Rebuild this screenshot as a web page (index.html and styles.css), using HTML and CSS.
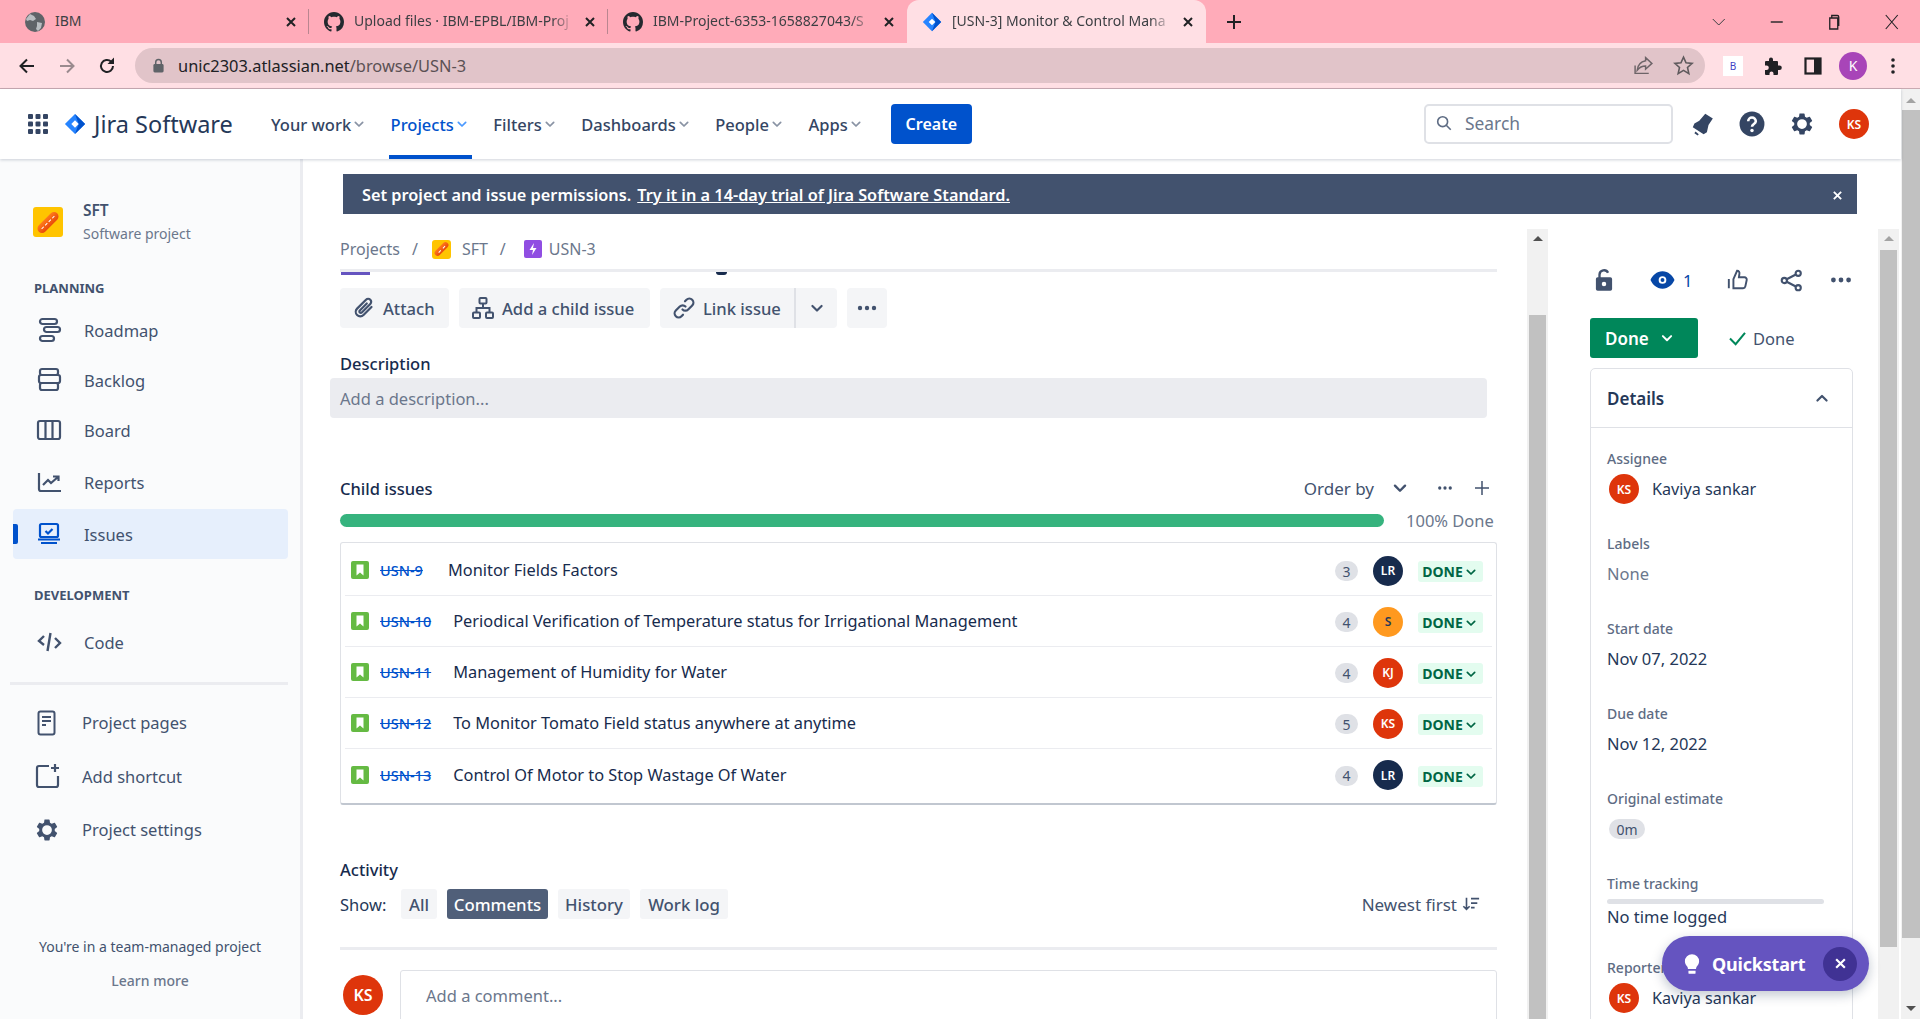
FILE: index.html
```html
<!DOCTYPE html>
<html lang="en">
<head>
    <meta charset="UTF-8">
    <title>[USN-3] Monitor &amp; Control Management</title>
    <meta name="viewport" content="width=device-width">
    <link rel="stylesheet" href="styles.css">
</head>
<body>

<svg class="sprite" width="0" height="0">
  <symbol id="i-globe" viewBox="0 0 20 20"><circle cx="10" cy="10" r="10" fill="#5f6368"/><path d="M5 2l4 2 2 3-3 2-3-1-3 1-1-2zM12 10l5 1-1 5-3 3-2-2 1-3z" fill="#b9bdc1"/></symbol>
  <symbol id="i-github" viewBox="0 0 16 16"><path fill="#24292f" d="M8 0C3.58 0 0 3.58 0 8c0 3.54 2.29 6.53 5.47 7.59.4.07.55-.17.55-.38 0-.19-.01-.82-.01-1.49-2.01.37-2.53-.49-2.69-.94-.09-.23-.48-.94-.82-1.13-.28-.15-.68-.52-.01-.53.63-.01 1.08.58 1.23.82.72 1.21 1.87.87 2.33.66.07-.52.28-.87.51-1.07-1.78-.2-3.64-.89-3.64-3.95 0-.87.31-1.59.82-2.15-.08-.2-.36-1.02.08-2.12 0 0 .67-.21 2.2.82.64-.18 1.32-.27 2-.27.68 0 1.36.09 2 .27 1.53-1.04 2.2-.82 2.2-.82.44 1.1.16 1.92.08 2.12.51.56.82 1.27.82 2.15 0 3.07-1.87 3.75-3.65 3.95.29.25.54.73.54 1.48 0 1.07-.01 1.93-.01 2.2 0 .21.15.46.55.38A8.013 8.013 0 0016 8c0-4.42-3.58-8-8-8z"/></symbol>
  <symbol id="i-jira" viewBox="0 0 24 24"><path fill="#2684ff" d="M12 1l11 11-11 11L1 12z"/><path fill="#0052cc" d="M12 1l11 11-11 11 4-11z"/><path fill="#fff" d="M12 8l4 4-4 4-4-4z"/></symbol>
  <symbol id="i-close" viewBox="0 0 12 12"><path d="M2 2l8 8M10 2l-8 8" stroke="currentColor" stroke-width="2" fill="none"/></symbol>
  <symbol id="i-chev" viewBox="0 0 24 24"><path d="M6.500 9.500l5.500 5.500 5.500-5.500" stroke="currentColor" stroke-width="2.600" fill="none" stroke-linecap="round" stroke-linejoin="round"/></symbol>
  <symbol id="i-up" viewBox="0 0 24 24"><path d="M6.500 15l5.500-5.500 5.500 5.500" stroke="currentColor" stroke-width="2.600" fill="none" stroke-linecap="round" stroke-linejoin="round"/></symbol>
  <symbol id="i-dots" viewBox="0 0 24 24"><circle cx="5" cy="12" r="2.200" fill="currentColor"/><circle cx="12" cy="12" r="2.200" fill="currentColor"/><circle cx="19" cy="12" r="2.200" fill="currentColor"/></symbol>
  <symbol id="i-roadmap" viewBox="0 0 26 26"><g fill="none" stroke="currentColor" stroke-width="2.200"><rect x="4" y="2" width="17" height="5" rx="2.500"/><rect x="8" y="10" width="16" height="5" rx="2.500"/><rect x="4" y="19" width="14" height="5" rx="2.500"/></g></symbol>
  <symbol id="i-backlog" viewBox="0 0 26 26"><g fill="none" stroke="currentColor" stroke-width="2.200"><rect x="4" y="2" width="18" height="6" rx="2"/><rect x="3" y="8" width="21" height="8" rx="2"/><rect x="4" y="16" width="18" height="7" rx="2"/></g></symbol>
  <symbol id="i-board" viewBox="0 0 26 26"><g fill="none" stroke="currentColor" stroke-width="2.200"><rect x="2" y="4" width="22" height="18" rx="2"/><path d="M9.500 4v18M16.500 4v18"/></g></symbol>
  <symbol id="i-reports" viewBox="0 0 26 26"><path d="M3 4v16a2 2 0 002 2h20M7 16l5-5 3 3 7-6M17 7.500h5.500V12" fill="none" stroke="currentColor" stroke-width="2.200"/></symbol>
  <symbol id="i-issues" viewBox="0 0 26 26"><g fill="none" stroke="currentColor" stroke-width="2.200"><rect x="4" y="3" width="18" height="13" rx="1.500"/><path d="M2 18.500h22M5 22h16M9.500 10l2.500 2.500 4.500-4.500"/></g></symbol>
  <symbol id="i-code" viewBox="0 0 26 26"><path d="M8 7l-5 5 5 4M14.500 4l-3 18M19 9l5 5-5 5" fill="none" stroke="currentColor" stroke-width="2.400"/></symbol>
  <symbol id="i-page" viewBox="0 0 26 26"><g fill="none" stroke="currentColor" stroke-width="2"><rect x="4.500" y="1.500" width="16" height="23" rx="2"/><path d="M8 7h9M8 11h9M8 15h4"/></g></symbol>
  <symbol id="i-shortcut" viewBox="0 0 26 26"><path d="M15 3H5a2 2 0 00-2 2v17a2 2 0 002 2h17a2 2 0 002-2V13M21 1v8M17 5h8" fill="none" stroke="currentColor" stroke-width="2.200"/></symbol>
  <symbol id="i-gear" viewBox="0 0 24 24"><path fill="currentColor" d="M19.140 12.940c.04-.3.06-.61.06-.94 0-.32-.02-.64-.07-.94l2.030-1.580a.49.49 0 00.12-.61l-1.920-3.320a.488.488 0 00-.59-.22l-2.390.96c-.5-.38-1.030-.7-1.620-.94l-.36-2.540a.484.484 0 00-.48-.41h-3.840c-.24 0-.43.17-.47.41l-.36 2.540c-.59.24-1.130.57-1.620.94l-2.390-.96c-.22-.08-.47 0-.59.22L2.740 8.870c-.12.21-.08.47.12.61l2.030 1.580c-.05.3-.09.63-.09.94s.02.64.07.94l-2.030 1.580a.49.49 0 00-.12.61l1.920 3.320c.12.22.37.29.59.22l2.390-.96c.5.38 1.030.7 1.620.94l.36 2.540c.05.24.24.41.48.41h3.840c.24 0 .44-.17.47-.41l.36-2.540c.59-.24 1.130-.56 1.620-.94l2.390.96c.22.08.47 0 .59-.22l1.920-3.320c.12-.22.07-.47-.12-.61l-2.010-1.580zM12 16.500a4.500 4.500 0 110-9 4.500 4.500 0 010 9z"/></symbol>
  <symbol id="i-clip" viewBox="0 0 24 24"><path d="M19.500 11l-8 8a4.500 4.500 0 01-6.400-6.400L14 3.700a3 3 0 014.300 4.300l-8.500 8.500a1.400 1.400 0 01-2-2l7-7" fill="none" stroke="currentColor" stroke-width="2.200" stroke-linecap="round"/></symbol>
  <symbol id="i-tree" viewBox="0 0 24 24"><g fill="none" stroke="currentColor" stroke-width="2"><rect x="8.500" y="2" width="7" height="5.500" rx="1"/><rect x="2" y="16.500" width="7" height="5.500" rx="1"/><rect x="15" y="16.500" width="7" height="5.500" rx="1"/><path d="M12 7.500V12M5.500 16.500V12h13v4.500"/></g></symbol>
  <symbol id="i-link" viewBox="0 0 24 24"><g fill="none" stroke="currentColor" stroke-width="2.200" stroke-linecap="round"><path d="M10.500 13.500a4 4 0 005.700 0l4-4a4 4 0 00-5.700-5.700l-1.500 1.500"/><path d="M13.500 10.500a4 4 0 00-5.700 0l-4 4a4 4 0 005.700 5.700l1.500-1.500"/></g></symbol>
  <symbol id="i-sort" viewBox="0 0 20 20"><path d="M5 3v13M1.500 12.500L5 16l3.500-3.500M10 4h9M10 9h7M10 14h4" fill="none" stroke="currentColor" stroke-width="1.800"/></symbol>
  <symbol id="i-story" viewBox="0 0 18 18"><rect width="18" height="18" rx="2" fill="#65ba43"/><path d="M5.500 3.500h7v11L9 11.500l-3.500 3z" fill="#fff"/></symbol>
</svg>

<div class="tabstrip">
  <div class="tab sep">
    <svg class="tab-ico"><use href="#i-globe"/></svg>
    <span class="tab-title">IBM</span>
    <svg class="tab-x"><use href="#i-close"/></svg>
  </div>
  <div class="tab sep">
    <svg class="tab-ico"><use href="#i-github"/></svg>
    <span class="tab-title fade">Upload files · IBM-EPBL/IBM-Proj</span>
    <svg class="tab-x"><use href="#i-close"/></svg>
  </div>
  <div class="tab">
    <svg class="tab-ico"><use href="#i-github"/></svg>
    <span class="tab-title fade">IBM-Project-6353-1658827043/S</span>
    <svg class="tab-x"><use href="#i-close"/></svg>
  </div>
  <div class="tab active">
    <svg class="tab-ico"><use href="#i-jira"/></svg>
    <span class="tab-title fade">[USN-3] Monitor &amp; Control Mana</span>
    <svg class="tab-x"><use href="#i-close"/></svg>
  </div>
  <svg class="newtab" viewBox="0 0 16 16"><path d="M8 1v14M1 8h14" stroke="#202124" stroke-width="2"/></svg>
  <div class="winctl">
    <svg viewBox="0 0 16 16"><path d="M2 5l6 6 6-6" fill="none" stroke="#3c4043"/></svg>
    <svg viewBox="0 0 16 16"><path d="M2 8h12" stroke="#202124" stroke-width="1.400"/></svg>
    <svg viewBox="0 0 16 16"><path d="M4 4h8v11H4zM6 4V1.500h5.500q1.500 0 1.500 1.500v9" fill="none" stroke="#202124" stroke-width="1.300"/></svg>
    <svg viewBox="0 0 16 16"><path d="M2 1l12 14M14 1L2 15" stroke="#202124" stroke-width="1.100"/></svg>
  </div>
</div>

<div class="toolbar">
  <div class="tb-btn"><svg viewBox="0 0 20 20"><path d="M17 10H4M10 3.500L3.500 10l6.500 6.500" fill="none" stroke="#202124" stroke-width="2"/></svg></div>
  <div class="tb-btn"><svg viewBox="0 0 20 20"><path d="M3 10h13M10 3.500l6.500 6.500-6.500 6.500" fill="none" stroke="#9a8a8e" stroke-width="2"/></svg></div>
  <div class="tb-btn"><svg viewBox="0 0 20 20"><path d="M16 10a6 6 0 11-1.800-4.300" fill="none" stroke="#202124" stroke-width="2"/><path d="M17 1.500V8h-6.500z" fill="#202124"/></svg></div>
  <div class="omnibox">
    <svg class="lock" viewBox="0 0 14 16"><rect x="1.500" y="6.500" width="11" height="9" rx="1.500" fill="#5f6368"/><path d="M4 7V4.500a3 3 0 016 0V7" fill="none" stroke="#5f6368" stroke-width="1.600"/></svg>
    <span class="url">unic2303.atlassian.net<span class="url-path">/browse/USN-3</span></span>
    <svg class="omni-ico" viewBox="0 0 20 20"><path d="M12 2.500l6 5.500-6 5.500V10.500c-4 0-6 1.500-8 4 .5-5 3-8 8-9zM2 10v7.500h13" fill="none" stroke="#6d6468" stroke-width="1.400"/></svg>
    <svg class="omni-ico star" viewBox="0 0 20 20"><path d="M10 2l2.400 5.400 5.800.6-4.400 3.900 1.300 5.800L10 14.700l-5.100 3 1.300-5.800L1.800 8l5.800-.6z" fill="none" stroke="#5f5a5d" stroke-width="1.500"/></svg>
  </div>
  <div class="tb-btn"><span class="ext-b">B</span></div>
  <div class="tb-btn"><svg viewBox="0 0 20 20"><path fill="#202124" d="M8 1.500a2 2 0 012 2V5h4a1 1 0 011 1v3.500h1.500a2.300 2.300 0 010 4.600H15V18a1 1 0 01-1 1h-3.500v-1.500a2 2 0 00-4 0V19H3a1 1 0 01-1-1v-4h1.500a2.300 2.300 0 000-4.600H2V6a1 1 0 011-1h3V3.500a2 2 0 012-2z"/></svg></div>
  <div class="tb-btn"><svg viewBox="0 0 20 20"><rect x="2.500" y="2.500" width="15" height="15" fill="none" stroke="#202124" stroke-width="2.200"/><rect x="11" y="3" width="6" height="14" fill="#202124"/></svg></div>
  <div class="tb-btn"><span class="profile">K</span></div>
  <div class="tb-btn"><svg viewBox="0 0 20 20"><circle cx="10" cy="4" r="1.800" fill="#202124"/><circle cx="10" cy="10" r="1.800" fill="#202124"/><circle cx="10" cy="16" r="1.800" fill="#202124"/></svg></div>
</div>

<div class="page">
  <div class="viewport">

    <header class="topnav">
      <svg class="grid-ico" viewBox="0 0 20 20" fill="#344563"><rect x="0" y="0" width="5" height="5" rx="1"/><rect x="7.500" y="0" width="5" height="5" rx="1"/><rect x="15" y="0" width="5" height="5" rx="1"/><rect x="0" y="7.500" width="5" height="5" rx="1"/><rect x="7.500" y="7.500" width="5" height="5" rx="1"/><rect x="15" y="7.500" width="5" height="5" rx="1"/><rect x="0" y="15" width="5" height="5" rx="1"/><rect x="7.500" y="15" width="5" height="5" rx="1"/><rect x="15" y="15" width="5" height="5" rx="1"/></svg>
      <svg class="jira-logo"><use href="#i-jira"/></svg>
      <span class="product">Jira Software</span>
      <nav class="topmenu">
        <a class="menu-item">Your work<svg><use href="#i-chev"/></svg></a>
        <a class="menu-item current">Projects<svg><use href="#i-chev"/></svg></a>
        <a class="menu-item">Filters<svg><use href="#i-chev"/></svg></a>
        <a class="menu-item">Dashboards<svg><use href="#i-chev"/></svg></a>
        <a class="menu-item">People<svg><use href="#i-chev"/></svg></a>
        <a class="menu-item">Apps<svg><use href="#i-chev"/></svg></a>
      </nav>
      <button class="create">Create</button>
      <div class="searchbox">
        <svg viewBox="0 0 20 20"><circle cx="8.500" cy="8.500" r="5.500" fill="none" stroke="#5e6c84" stroke-width="1.800"/><path d="M12.500 12.500l5 5" stroke="#5e6c84" stroke-width="1.800"/></svg>
        <span>Search</span>
      </div>
      <svg class="nav-ico bell" viewBox="0 0 24 24"><path fill="#344563" d="M15 2.500l7 4.500-4 6-1.500 6.500-3 2-10-6.500 1.500-3.500 4.500-2.500zM6 19l3 2.500-1 1-3-2z"/></svg>
      <svg class="nav-ico" viewBox="0 0 24 24"><circle cx="12" cy="12" r="11.500" fill="#344563"/><path d="M8.500 9.500a3.500 3.500 0 117 0c0 2.500-3.500 2.500-3.500 5" fill="none" stroke="#fff" stroke-width="2.400"/><circle cx="12" cy="18" r="1.600" fill="#fff"/></svg>
      <svg class="nav-ico gear"><use href="#i-gear"/></svg>
      <span class="avatar red nav-avatar">KS</span>
    </header>

    <div class="below">
      <aside class="sidebar">
        <div class="project">
          <span class="sft-logo big"><i></i></span>
          <div>
            <div class="project-name">SFT</div>
            <div class="project-type">Software project</div>
          </div>
        </div>

        <div class="side-title">PLANNING</div>
        <a class="side-item"><svg><use href="#i-roadmap"/></svg>Roadmap</a>
        <a class="side-item"><svg><use href="#i-backlog"/></svg>Backlog</a>
        <a class="side-item"><svg><use href="#i-board"/></svg>Board</a>
        <a class="side-item spaced"><svg><use href="#i-reports"/></svg>Reports</a>
        <a class="side-item spaced selected"><svg><use href="#i-issues"/></svg>Issues</a>

        <div class="side-title dev">DEVELOPMENT</div>
        <a class="side-item"><svg><use href="#i-code"/></svg>Code</a>

        <div class="side-rule"></div>

        <a class="side-item lower"><svg><use href="#i-page"/></svg>Project pages</a>
        <a class="side-item lower"><svg><use href="#i-shortcut"/></svg>Add shortcut</a>
        <a class="side-item lower"><svg><use href="#i-gear"/></svg>Project settings</a>

        <div class="side-foot">You're in a team-managed project</div>
        <div class="side-foot more">Learn more</div>
      </aside>

      <main class="content">
        <div class="banner">
          <span class="banner-text">Set project and issue permissions.</span>
          <a class="banner-link">Try it in a 14-day trial of Jira Software Standard.</a>
          <svg class="banner-x"><use href="#i-close"/></svg>
        </div>

        <div class="panes">
          <section class="issue">
            <div class="crumbs">
              <span>Projects</span>
              <span class="slash">/</span>
              <span class="sft-logo small"><i></i></span>
              <span>SFT</span>
              <span class="slash">/</span>
              <svg class="epic" viewBox="0 0 18 18"><rect width="18" height="18" rx="2" fill="#904ee2"/><path d="M10 3L5.500 10H9l-1 5 4.500-7H9z" fill="#fff"/></svg>
              <span>USN-3</span>
            </div>
            <div class="cut"><i class="cut-a"></i><i class="cut-b"></i></div>

            <div class="actions">
              <button class="act w-attach"><svg><use href="#i-clip"/></svg>Attach</button>
              <button class="act w-child"><svg><use href="#i-tree"/></svg>Add a child issue</button>
              <div class="act-group">
                <button class="act joined"><svg><use href="#i-link"/></svg>Link issue</button>
                <button class="act chevbtn"><svg><use href="#i-chev"/></svg></button>
              </div>
              <button class="act morebtn"><svg><use href="#i-dots"/></svg></button>
            </div>

            <div class="heading desc-head">Description</div>
            <div class="descbox">Add a description...</div>

            <div class="child-head">
              <span class="heading">Child issues</span>
              <span class="orderby">Order by</span>
              <svg class="ch-chev"><use href="#i-chev"/></svg>
              <svg class="ch-dots"><use href="#i-dots"/></svg>
              <svg class="ch-plus" viewBox="0 0 16 16"><path d="M8 1v14M1 8h14" stroke="#42526e" stroke-width="1.500"/></svg>
            </div>
            <div class="progress">
              <div class="bar"></div>
              <span class="pct">100% Done</span>
            </div>

            <div class="children">
              <div class="child">
                <svg class="story"><use href="#i-story"/></svg>
                <a class="key">USN-9</a>
                <span class="summary">Monitor Fields Factors</span>
                <span class="count">3</span>
                <span class="avatar navy">LR</span>
                <span class="lozenge">DONE<svg><use href="#i-chev"/></svg></span>
              </div>
              <div class="child">
                <svg class="story"><use href="#i-story"/></svg>
                <a class="key">USN-10</a>
                <span class="summary">Periodical Verification of Temperature status for Irrigational Management</span>
                <span class="count">4</span>
                <span class="avatar orange">S</span>
                <span class="lozenge">DONE<svg><use href="#i-chev"/></svg></span>
              </div>
              <div class="child">
                <svg class="story"><use href="#i-story"/></svg>
                <a class="key">USN-11</a>
                <span class="summary">Management of Humidity for Water</span>
                <span class="count">4</span>
                <span class="avatar red">KJ</span>
                <span class="lozenge">DONE<svg><use href="#i-chev"/></svg></span>
              </div>
              <div class="child">
                <svg class="story"><use href="#i-story"/></svg>
                <a class="key">USN-12</a>
                <span class="summary">To Monitor Tomato Field status anywhere at anytime</span>
                <span class="count">5</span>
                <span class="avatar red">KS</span>
                <span class="lozenge">DONE<svg><use href="#i-chev"/></svg></span>
              </div>
              <div class="child">
                <svg class="story"><use href="#i-story"/></svg>
                <a class="key">USN-13</a>
                <span class="summary">Control Of Motor to Stop Wastage Of Water</span>
                <span class="count">4</span>
                <span class="avatar navy">LR</span>
                <span class="lozenge">DONE<svg><use href="#i-chev"/></svg></span>
              </div>
            </div>

            <div class="heading activity">Activity</div>
            <div class="show-row">
              <span class="show">Show:</span>
              <button class="pill w-all">All</button>
              <button class="pill w-comments on">Comments</button>
              <button class="pill w-history">History</button>
              <button class="pill w-worklog">Work log</button>
              <span class="newest">Newest first<svg><use href="#i-sort"/></svg></span>
            </div>
            <div class="act-rule"></div>
            <div class="comment">
              <span class="avatar red large">KS</span>
              <div class="commentbox">Add a comment...</div>
            </div>
          </section>

          <div class="sbar inner">
            <i class="arrow up dark"></i>
            <i class="thumb first"></i>
          </div>

          <aside class="panel">
            <div class="panel-icons">
              <svg class="pi lockopen" viewBox="0 0 20 26"><path d="M5 11V7a5 5 0 019.500-2" fill="none" stroke="#42526e" stroke-width="2.600"/><path fill-rule="evenodd" fill="#42526e" d="M3 10h14a2 2 0 012 2v11a2 2 0 01-2 2H3a2 2 0 01-2-2V12a2 2 0 012-2zm7 5a2.500 2.500 0 100 5 2.500 2.500 0 000-5z"/></svg>
              <svg class="pi eye" viewBox="0 0 26 20"><path fill="#0747a6" fill-rule="evenodd" d="M13 1c6 0 10.500 4.500 12.500 9-2 4.500-6.500 9-12.500 9S2.500 14.500.500 10C2.500 5.500 7 1 13 1zm0 5a4 4 0 100 8 4 4 0 000-8z"/><circle cx="13" cy="10" r="2" fill="#0747a6"/></svg>
              <span class="watch">1</span>
              <svg class="pi thumbs" viewBox="0 0 24 24"><path d="M2 11v10M7 21V11l4-9c2 0 3 1.500 2.500 3.500L13 9h6a2.500 2.500 0 012.500 3l-1.500 7a2.500 2.500 0 01-2.500 2z" fill="none" stroke="#42526e" stroke-width="2.100"/></svg>
              <svg class="pi share" viewBox="0 0 24 24"><g fill="none" stroke="#42526e" stroke-width="2.200"><circle cx="19" cy="4.500" r="2.700"/><circle cx="19" cy="19.500" r="2.700"/><circle cx="4.500" cy="12" r="2.700"/><path d="M7 10.700l9.500-5M7 13.300l9.500 5"/></g></svg>
              <svg class="pi pdots"><use href="#i-dots"/></svg>
            </div>

            <div class="status-row">
              <button class="status">Done<svg><use href="#i-chev"/></svg></button>
              <svg class="tick" viewBox="0 0 20 16"><path d="M2 8l6 6L18 2" fill="none" stroke="#00875a" stroke-width="2.200"/></svg>
              <span class="tick-text">Done</span>
            </div>

            <div class="details">
              <div class="details-head">
                <span>Details</span>
                <svg><use href="#i-up"/></svg>
              </div>
              <div class="field">
                <div class="f-label">Assignee</div>
                <div class="f-value person"><span class="avatar red">KS</span>Kaviya sankar</div>
              </div>
              <div class="field">
                <div class="f-label">Labels</div>
                <div class="f-value muted">None</div>
              </div>
              <div class="field">
                <div class="f-label">Start date</div>
                <div class="f-value">Nov 07, 2022</div>
              </div>
              <div class="field">
                <div class="f-label">Due date</div>
                <div class="f-value">Nov 12, 2022</div>
              </div>
              <div class="field">
                <div class="f-label">Original estimate</div>
                <div class="f-value"><span class="estimate">0m</span></div>
              </div>
              <div class="field short">
                <div class="f-label">Time tracking</div>
                <div class="track"></div>
                <div class="logged">No time logged</div>
              </div>
              <div class="field">
                <div class="f-label">Reporter</div>
                <div class="f-value person"><span class="avatar red">KS</span>Kaviya sankar</div>
              </div>
            </div>
          </aside>

          <div class="sbar second">
            <i class="arrow up"></i>
            <i class="thumb long"></i>
          </div>
        </div>

        <div class="quickstart">
          <svg class="bulb" viewBox="0 0 18 24"><path fill="#fff" d="M9 1a8 8 0 00-8 8c0 3 1.500 4.500 3 6.500l.5 2h9l.5-2c1.500-2 3-3.500 3-6.500a8 8 0 00-8-8zM5 19.500h8V22a1 1 0 01-1 1H6a1 1 0 01-1-1z"/></svg>
          <span>Quickstart</span>
          <span class="qs-close"><svg><use href="#i-close"/></svg></span>
        </div>
      </main>
    </div>
  </div>

  <div class="sbar outer">
    <i class="arrow up faint"></i>
    <i class="thumb page-thumb"></i>
    <i class="arrow down dark"></i>
  </div>
</div>

</body>
</html>
```

FILE: styles.css
```css
* { box-sizing: border-box; }

html, body { margin: 0; height: 1019px; overflow: hidden; }

body {
  font-family: "Noto Sans", "Open Sans", sans-serif;
  font-size: 16px;
  color: #172b4d;
  background: #fff;
}

button { font-family: inherit; border: 0; padding: 0; }
.sprite { position: absolute; }
svg { display: block; flex: none; }

/* browser tabs */
.tabstrip {
  height: 43px;
  background: #ffabb9;
  display: flex;
  align-items: center;
  padding-left: 10px;
}
.tab {
  width: 299px;
  height: 43px;
  padding: 0 12px 0 15px;
  display: flex;
  align-items: center;
  gap: 10px;
  font-size: 14px;
  color: #3c3f43;
  position: relative;
}
.tab.sep::after {
  content: "";
  position: absolute;
  right: 0;
  top: 9px;
  height: 25px;
  width: 1px;
  background: #b98690;
}
.tab.active { background: #ffdfe4; border-radius: 12px 12px 0 0; }
.tab-ico { width: 20px; height: 20px; }
.tab-title { flex: 1; white-space: nowrap; padding-bottom: 2px; }
.tab-title.fade {
  -webkit-mask-image: linear-gradient(to right, #000 90%, transparent);
  mask-image: linear-gradient(to right, #000 90%, transparent);
}
.tab-x { width: 12px; height: 12px; color: #202124; }
.newtab { width: 16px; height: 16px; margin-left: 20px; }
.winctl { margin-left: auto; display: flex; padding-right: 0; }
.winctl svg { width: 57.5px; height: 16px; }

/* browser toolbar */
.toolbar {
  height: 46px;
  background: #ffdfe4;
  border-bottom: 1px solid #c9aab2;
  display: flex;
  align-items: flex-start;
  padding: 5px 7px 0;
}
.tb-btn {
  width: 40px;
  height: 35px;
  display: flex;
  align-items: center;
  justify-content: center;
}
.tb-btn svg { width: 20px; height: 20px; }
.omnibox {
  width: 1570px;
  height: 35px;
  margin: 0 8px;
  background: #e1c4c9;
  border-radius: 18px;
  display: flex;
  align-items: center;
  padding-left: 17px;
  font-size: 16.4px;
  color: #202124;
}
.lock { width: 13px; height: 15px; margin-right: 13px; }
.url-path { color: #5b5154; }
.omni-ico { width: 21px; height: 21px; margin-left: auto; }
.omni-ico.star { margin-left: 19px; margin-right: 11px; }
.ext-b {
  width: 20px;
  height: 20px;
  background: #fff;
  color: #3f3fc4;
  font-size: 10px;
  display: flex;
  align-items: center;
  justify-content: center;
}
.profile {
  width: 28px;
  height: 28px;
  border-radius: 50%;
  background: #a845b8;
  color: #fff;
  font-size: 14px;
  display: flex;
  align-items: center;
  justify-content: center;
}

/* page and scrollbars */
.page { display: flex; height: 930px; }
.viewport { width: 1901px; display: flex; flex-direction: column; }
.sbar {
  background: #f1f1f1;
  display: flex;
  flex-direction: column;
  align-items: center;
  position: relative;
  flex: none;
}
.sbar.outer { width: 19px; padding-left: 1px; }
.sbar.inner { width: 21px; }
.sbar.second { width: 21px; }
.thumb { display: block; width: 17px; background: #c1c1c1; }
.thumb.first { flex: 1; margin-top: 70px; }
.thumb.long { height: 697px; margin-top: 5px; }
.thumb.page-thumb { height: 828px; margin-top: 3px; width: 18px; }
.arrow { display: block; width: 0; height: 0; border-left: 5px solid transparent; border-right: 5px solid transparent; }
.arrow.up { margin-top: 7px; border-bottom: 5px solid #a3a3a3; margin-bottom: 4px; }
.arrow.up.dark { border-bottom-color: #505050; }
.arrow.up.faint { border-bottom-color: #a3a3a3; margin-top: 9px; }
.arrow.down { border-top: 5px solid #505050; margin-top: auto; margin-bottom: 8px; }

/* jira top nav */
.topnav {
  height: 70px;
  flex: none;
  display: flex;
  align-items: center;
  padding-left: 28px;
  background: #fff;
  box-shadow: 0 1px 3px rgba(9, 30, 66, .2);
  position: relative;
  z-index: 2;
}
.grid-ico { width: 20px; height: 20px; }
.jira-logo { width: 22px; height: 24px; margin-left: 16px; }
.product { font-size: 23.5px; font-weight: 400; color: #253858; margin-left: 8px; width: 177px; white-space: nowrap; }
.topmenu { display: flex; gap: 23.5px; height: 70px; }
.menu-item {
  display: flex;
  align-items: center;
  font-size: 16.5px;
  font-weight: 500;
  color: #344563;
  position: relative;
  white-space: nowrap;
}
.menu-item svg { width: 16px; height: 16px; color: #8993a4; }
.menu-item.current { color: #0052cc; }
.menu-item.current svg { color: #4c9aff; }
.menu-item.current::after {
  content: "";
  position: absolute;
  left: -2px;
  right: -2px;
  bottom: 0;
  height: 4px;
  background: #0052cc;
}
.create {
  width: 81px;
  height: 40px;
  margin-left: 27px;
  background: #0052cc;
  color: #fff;
  font-size: 16px;
  font-weight: 600;
  border-radius: 4px;
}
.searchbox {
  width: 249px;
  height: 40px;
  margin-left: auto;
  border: 2px solid #dfe1e6;
  border-radius: 5px;
  display: flex;
  align-items: center;
  gap: 12px;
  padding: 0 0 2px 9px;
  color: #6b778c;
  font-size: 17.4px;
}
.searchbox svg { width: 18px; height: 18px; }
.nav-ico { width: 26px; height: 26px; margin-left: 24px; }
.nav-ico.bell { margin-left: 16px; }
.nav-ico.gear { color: #344563; }
.avatar {
  width: 30px;
  height: 30px;
  border-radius: 50%;
  flex: none;
  display: flex;
  align-items: center;
  justify-content: center;
  color: #fff;
  font-size: 12px;
  font-weight: 600;
}
.avatar.red { background: #de350b; }
.avatar.navy { background: #172b4d; }
.avatar.orange { background: #ff991f; color: #253858; }
.avatar.large { width: 40px; height: 40px; font-size: 16px; }
.nav-avatar { margin-left: 24px; margin-right: 32px; }

/* sidebar */
.below { display: flex; flex: 1; min-height: 0; }
.sidebar {
  width: 302px;
  flex: none;
  background: #fafbfc;
  border-right: 2px solid #ebecf0;
  box-shadow: 1px 0 0 #ebecf0;
  color: #42526e;
  padding-top: 40px;
}
.project { display: flex; align-items: center; gap: 20px; padding-left: 33px; height: 46px; }
.sft-logo {
  display: flex;
  align-items: center;
  justify-content: center;
  background: #ffc400;
  border-radius: 3px;
  flex: none;
  overflow: hidden;
}
.sft-logo i {
  display: flex;
  align-items: center;
  padding: 0 4px;
  background: linear-gradient(#ff7a1a, #e8490c);
  border-radius: 5px;
  transform: rotate(-45deg);
}
.sft-logo i::after { content: ""; flex: 1; border-top: 1px dashed #fff; }
.sft-logo.big { width: 30px; height: 30px; }
.sft-logo.big i { width: 26px; height: 9px; flex: none; }
.sft-logo.small { width: 19px; height: 19px; }
.sft-logo.small i { width: 17px; height: 6px; flex: none; }
.project-name { font-size: 15.5px; font-weight: 600; line-height: 23px; }
.project-type { font-size: 14px; line-height: 23px; color: #6b778c; }
.side-title { font-size: 13px; font-weight: 700; height: 20px; line-height: 20px; padding-left: 34px; margin-top: 33px; margin-bottom: 7px; }
.side-title.dev { margin-top: 26px; margin-bottom: 12px; }
.side-item {
  height: 50px;
  margin: 0 12px 0 13px;
  display: flex;
  align-items: center;
  padding-left: 23px;
  gap: 22px;
  font-size: 16.5px;
  position: relative;
  border-radius: 4px;
}
.side-item.spaced { margin-top: 2px; }
.side-item svg { width: 26px; height: 26px; }
.side-item.selected { background: #e6effc; color: #42526e; }
.side-item.selected svg { color: #0052cc; }
.side-item.selected::before {
  content: "";
  position: absolute;
  left: 0;
  top: 15px;
  width: 5px;
  height: 20px;
  background: #0052cc;
  border-radius: 0 2px 2px 0;
}
.side-rule { height: 3px; background: #ebecf0; margin: 15px 12px 11px 10px; }
.side-item.lower { height: 53.5px; padding-left: 21px; gap: 22px; }
.side-foot { text-align: center; font-size: 14px; height: 20px; line-height: 20px; margin-top: 80px; }
.side-foot.more { margin-top: 14px; color: #6b778c; font-weight: 500; }

/* main area */
.content { flex: 1; position: relative; min-width: 0; }
.banner {
  height: 40px;
  margin: 15px 44px 0 41px;
  background: #42526e;
  color: #fff;
  display: flex;
  align-items: center;
  padding: 2px 0 0 19px;
  font-size: 16.3px;
  font-weight: 600;
}
.banner-link { text-decoration: underline; margin-left: 6px; }
.banner-x { width: 11px; height: 11px; margin-left: auto; margin-right: 14px; }
.panes { display: flex; height: 790px; margin-top: 15px; }

/* issue column */
.issue { width: 1225px; flex: none; padding: 0 30px 0 38px; overflow: hidden; }
.crumbs {
  height: 43px;
  border-bottom: 3px solid #ebecf0;
  display: flex;
  align-items: center;
  color: #6b778c;
  font-size: 16px;
}
.slash { margin: 0 14px 0 12px; }
.sft-logo.small { margin-right: 11px; }
.epic { width: 18px; height: 18px; margin: 0 7px 0 4px; }
.cut { height: 16px; display: flex; align-items: flex-start; }
.cut i { display: block; height: 3px; }
.cut-a { width: 29px; margin-left: 1px; background: #6554c0; }
.cut-b { width: 11px; margin-left: 346px; background: #172b4d; border-radius: 0 0 6px 6px; }

.actions { display: flex; gap: 10px; height: 40px; }
.act {
  height: 40px;
  padding: 0 0 0 12px;
  display: flex;
  align-items: center;
  gap: 7px;
  background: #f4f5f7;
  border-radius: 4px;
  color: #42526e;
  font-size: 16.6px;
  font-weight: 500;
  white-space: nowrap;
}
.act svg { width: 24px; height: 24px; }
.act.w-attach { width: 109px; }
.act.w-child { width: 191px; }
.act-group { display: flex; }
.act.joined { width: 136px; border-radius: 4px 0 0 4px; border-right: 2px solid #dfe1e6; }
.act.chevbtn { width: 41px; padding: 0; justify-content: center; border-radius: 0 4px 4px 0; }
.act.chevbtn svg { width: 20px; height: 20px; }
.act.morebtn { width: 40px; padding: 0; justify-content: center; }

.heading { font-size: 16.5px; font-weight: 500; color: #172b4d; }
.desc-head { height: 20px; line-height: 20px; margin-top: 26px; }
.descbox {
  height: 40px;
  margin: 4px 10px 0 -10px;
  padding-left: 10px;
  background: #ebecf0;
  border-radius: 4px;
  display: flex;
  align-items: center;
  color: #6b778c;
  font-size: 16.5px;
}
.child-head { height: 30px; margin-top: 55px; display: flex; align-items: center; color: #42526e; }
.orderby { margin-left: auto; font-size: 17px; }
.ch-chev { width: 22px; height: 22px; margin-left: 15px; }
.ch-dots { width: 18px; height: 18px; margin-left: 25px; }
.ch-plus { width: 16px; height: 16px; margin: 0 7px 0 20px; }
.progress { display: flex; align-items: center; gap: 22px; margin-top: 11px; height: 13px; }
.bar { flex: 1; height: 13px; background: #36b37e; border-radius: 7px; }
.pct { width: 91px; color: #6b778c; font-size: 16.5px; white-space: nowrap; }

.children {
  margin-top: 15px;
  border: 1px solid #dfe1e6;
  border-bottom: 2px solid #c1c7d0;
  border-radius: 3px;
  padding: 2px 4px 4px;
  height: 263px;
}
.child {
  height: 51px;
  display: flex;
  align-items: center;
  padding: 0 9px 0 6px;
  border-bottom: 1px solid #ebecf0;
}
.child:last-child { border-bottom: 0; }
.story { width: 18px; height: 18px; }
.key {
  margin-left: 11px;
  min-width: 46px;
  color: #0052cc;
  font-size: 14.5px;
  font-weight: 500;
  text-decoration: line-through;
  white-space: nowrap;
}
.summary { margin-left: 22px; flex: 1; font-size: 16.35px; white-space: nowrap; }
.count {
  width: 23px;
  height: 20px;
  margin-top: 2px;
  border-radius: 10px;
  background: #dfe1e6;
  display: flex;
  align-items: center;
  justify-content: center;
  font-size: 14px;
  color: #42526e;
}
.child .avatar { margin: 1px 0 0 15px; }
.lozenge {
  width: 65px;
  height: 21px;
  margin: 3px 0 0 15px;
  background: #e3fcef;
  color: #006644;
  border-radius: 3px;
  display: flex;
  align-items: center;
  justify-content: center;
  font-size: 14px;
  font-weight: 700;
}
.lozenge svg { width: 16px; height: 16px; }

.activity { height: 24px; line-height: 24px; margin-top: 53px; }
.show-row { display: flex; align-items: center; gap: 10px; height: 30px; margin-top: 7px; }
.show { font-size: 16.5px; width: 51px; color: #253858; }
.pill {
  height: 30px;
  padding: 0;
  background: #f4f5f7;
  color: #42526e;
  border-radius: 3px;
  font-size: 16.8px;
  font-weight: 500;
  white-space: nowrap;
}
.pill.on { background: #505f79; color: #fff; }
.pill.w-all { width: 36px; }
.pill.w-comments { width: 101px; }
.pill.w-history { width: 72px; }
.pill.w-worklog { width: 88px; }
.newest { margin-left: auto; margin-right: 17px; display: flex; align-items: center; gap: 5px; font-size: 17px; color: #42526e; }
.newest svg { width: 18px; height: 18px; }
.act-rule { height: 3px; background: #ebecf0; margin-top: 28px; }
.comment { display: flex; margin-top: 20px; }
.comment .avatar { margin: 5px 0 0 3px; }
.commentbox {
  flex: 1;
  height: 70px;
  margin-left: 17px;
  border: 1px solid #dfe1e6;
  border-radius: 3px;
  padding: 13px 0 0 25px;
  color: #6b778c;
  font-size: 16.5px;
}

/* right panel */
.panel { width: 330px; flex: none; padding: 0 25px 0 42px; overflow: hidden; }
.panel-icons { height: 40px; margin-top: 31px; display: flex; align-items: center; color: #42526e; }
.pi { flex: none; }
.pi.lockopen { width: 18px; height: 24px; margin-left: 5px; }
.pi.eye { width: 25px; height: 20px; margin-left: 37px; }
.watch { color: #0747a6; margin-left: 8px; font-size: 16.5px; }
.pi.thumbs { width: 22px; height: 22px; margin-left: 35px; }
.pi.share { width: 23px; height: 23px; margin-left: 31px; }
.pi.pdots { width: 26px; height: 26px; margin-left: 25px; }
.status-row { display: flex; align-items: center; margin-top: 18px; height: 40px; }
.status {
  width: 108px;
  height: 40px;
  background: #00875a;
  color: #fff;
  font-size: 17px;
  font-weight: 600;
  border-radius: 3px;
  display: flex;
  align-items: center;
  gap: 9px;
  padding-left: 15px;
}
.status svg { width: 18px; height: 18px; }
.tick { width: 19px; height: 15px; margin-left: 30px; }
.tick-text { margin-left: 6px; font-size: 16.5px; color: #42526e; }
.details {
  margin-top: 10px;
  height: 700px;
  border: 1px solid #dfe1e6;
  border-radius: 5px;
  padding: 0 0 0 16px;
}
.details-head {
  height: 59px;
  margin-left: -16px;
  padding: 0 20px 0 16px;
  border-bottom: 1px solid #dfe1e6;
  display: flex;
  align-items: center;
  justify-content: space-between;
  font-size: 17px;
  font-weight: 600;
  color: #253858;
  margin-bottom: 21px;
}
.details-head svg { width: 20px; height: 20px; color: #42526e; }
.field { height: 85px; }
.field.short { height: 84px; }
.f-label { height: 20px; line-height: 20px; font-size: 14px; font-weight: 500; color: #5e6c84; }
.f-value { height: 30px; margin-top: 5px; padding-bottom: 2px; display: flex; align-items: center; font-size: 16.5px; color: #253858; }
.f-value.muted { color: #6b778c; }
.f-value.person { padding-bottom: 0; font-size: 16.2px; }
.person .avatar { margin: 0 13px 0 2px; }
.estimate { background: #dfe1e6; border-radius: 10px; height: 20px; width: 36px; margin: 2px 0 0 2px; display: flex; align-items: center; justify-content: center; font-size: 14px; color: #42526e; }
.track { height: 5px; width: 217px; margin-top: 5px; background: #dfe1e6; border-radius: 3px; }
.logged { height: 26px; line-height: 26px; font-size: 16.5px; color: #253858; }

/* quickstart */
.quickstart {
  position: absolute;
  right: 32px;
  bottom: 28px;
  width: 207px;
  height: 55px;
  border-radius: 28px;
  background: #6554c0;
  box-shadow: 0 4px 12px rgba(9, 30, 66, .25);
  color: #fff;
  display: flex;
  align-items: center;
  padding-left: 22px;
  font-size: 18px;
  font-weight: 700;
  letter-spacing: -.2px;
}
.bulb { width: 16px; height: 24px; margin-right: 12px; }
.qs-close {
  width: 34px;
  height: 34px;
  border-radius: 50%;
  background: #403294;
  margin-left: auto;
  margin-right: 12px;
  display: flex;
  align-items: center;
  justify-content: center;
}
.qs-close svg { width: 13px; height: 13px; }
```
